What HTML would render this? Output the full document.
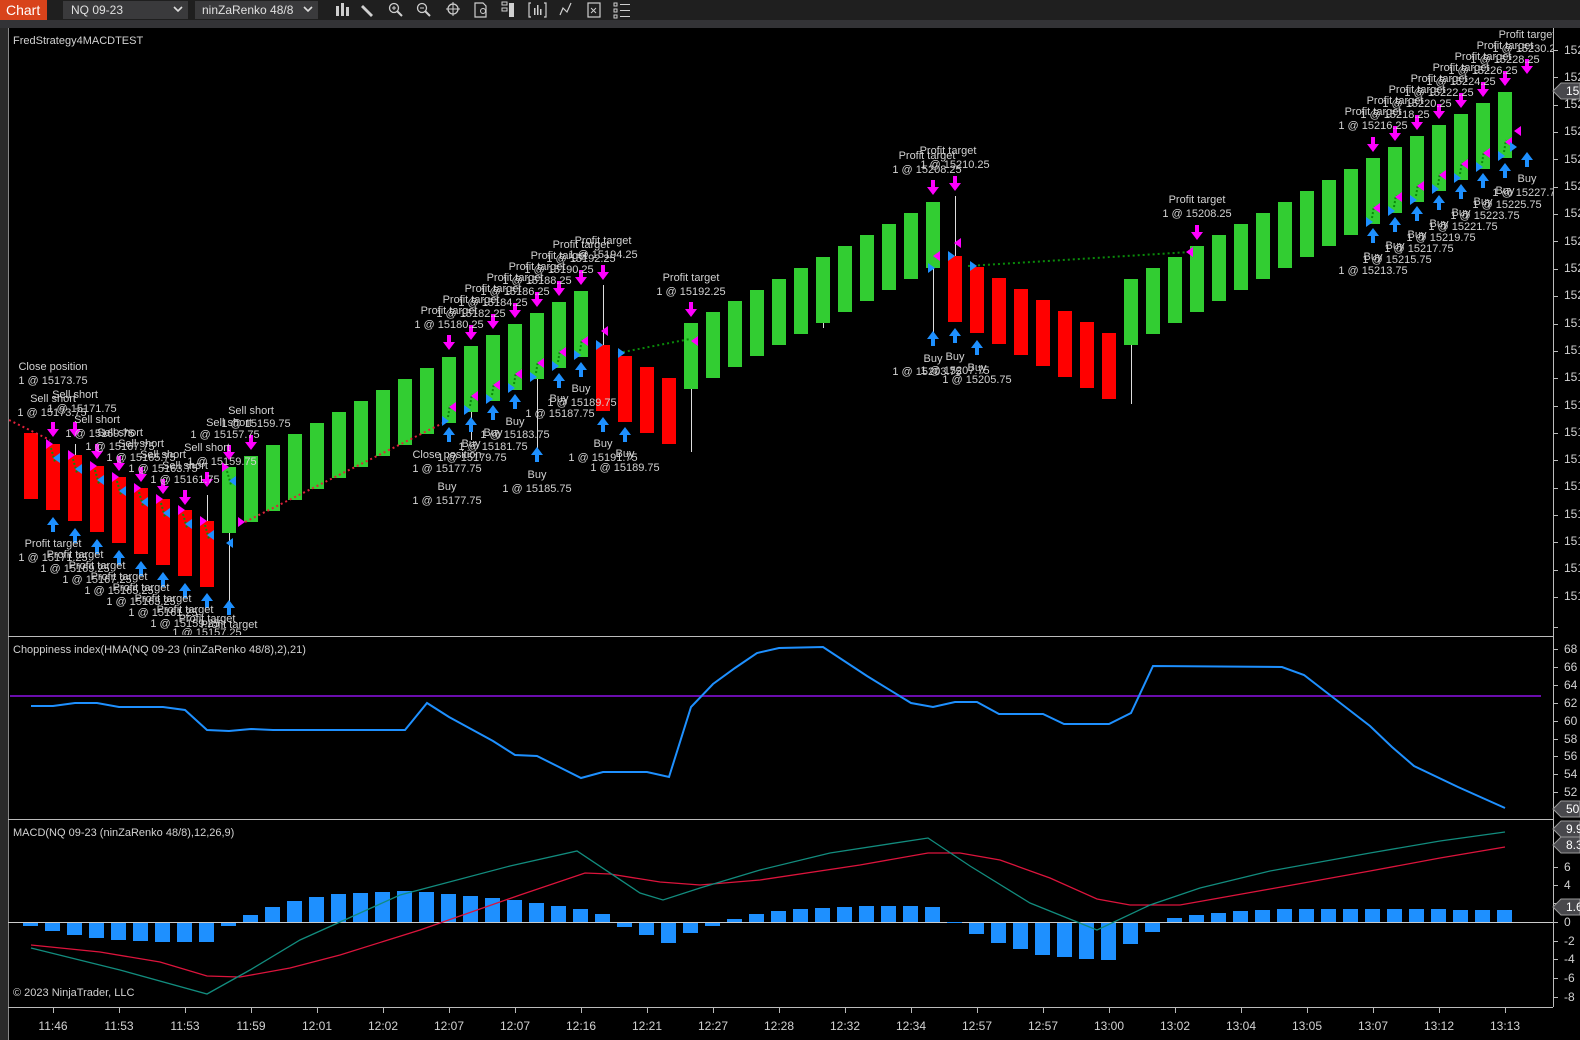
<!DOCTYPE html>
<html><head><meta charset="utf-8">
<style>
html,body{margin:0;padding:0;background:#1f1f1f;width:1580px;height:1040px;overflow:hidden}
svg{display:block}
text{font-family:"Liberation Sans",sans-serif}
</style></head>
<body>
<svg id="s" width="1580" height="1040" viewBox="0 0 1580 1040" xmlns="http://www.w3.org/2000/svg">
<defs>
<clipPath id="cm"><rect x="9" y="28" width="1544" height="607"/></clipPath>
<clipPath id="cw"><rect x="0" y="0" width="1580" height="1040"/></clipPath>
</defs>
<!-- toolbar -->
<rect x="0" y="0" width="1580" height="20" fill="#1f1f1f"/>
<rect x="0" y="20" width="1580" height="8" fill="#333336"/>
<rect x="0" y="0" width="47" height="20" fill="#d8431b"/>
<text x="6" y="15" font-size="14" fill="#fff">Chart</text>
<rect x="63" y="1" width="125" height="18" fill="#3a3a3c"/>
<text x="71" y="14" font-size="12" fill="#e0e0e0">NQ 09-23</text>
<path d="M174 7 l4 4 l4 -4" stroke="#ddd" stroke-width="1.6" fill="none"/>
<rect x="195" y="1" width="123" height="18" fill="#3a3a3c"/>
<text x="202" y="14" font-size="12" fill="#e0e0e0">ninZaRenko 48/8</text>
<path d="M304 7 l4 4 l4 -4" stroke="#ddd" stroke-width="1.6" fill="none"/>
<g fill="#cfcfcf" stroke="#cfcfcf">
<rect x="336" y="6" width="3" height="10" stroke="none"/><rect x="341" y="3" width="3" height="13" stroke="none"/><rect x="346" y="7" width="3" height="9" stroke="none"/>
<path d="M363 5 l10 10 l-2 2 l-10 -10 z" stroke="none"/>
<circle cx="394" cy="8" r="4.5" fill="none" stroke-width="1.3"/><path d="M397 11 l5 5" stroke-width="2"/><path d="M392 8 h4 M394 6 v4" stroke-width="1"/>
<circle cx="422" cy="8" r="4.5" fill="none" stroke-width="1.3"/><path d="M425 11 l5 5" stroke-width="2"/><path d="M420 8 h4" stroke-width="1"/>
<circle cx="453" cy="9" r="5" fill="none" stroke-width="1.3"/><path d="M453 2 v14 M446 9 h14" stroke-width="1"/>
<path d="M475 3 h8 l3 3 v11 h-11 z" fill="none" stroke-width="1.2"/><circle cx="483" cy="11" r="2.5" fill="none"/>
<rect x="502" y="2" width="5" height="3" fill="none"/><rect x="502" y="8" width="5" height="3" fill="none"/><rect x="509" y="3" width="5" height="14" stroke="none"/>
<path d="M531 3 h-2 v14 h2 M544 3 h2 v14 h-2" fill="none" stroke-width="1.2"/><rect x="534" y="8" width="1.5" height="7" stroke="none"/><rect x="537" y="5" width="1.5" height="10" stroke="none"/><rect x="540" y="9" width="1.5" height="6" stroke="none"/>
<path d="M560 15 l3 -7 l4 4 l4 -9" fill="none" stroke-width="1.2"/>
<rect x="588" y="3" width="12" height="14" fill="none" stroke-width="1.2"/><path d="M591 8 l5 5 M596 8 l-5 5" stroke-width="1"/>
<rect x="614" y="3" width="3" height="3" fill="none"/><rect x="614" y="9" width="3" height="3" fill="none"/><rect x="614" y="15" width="3" height="3" fill="none"/><path d="M620 4.5 h10 M620 10.5 h10 M620 16.5 h10" stroke-width="1"/>
</g>
<!-- chart area -->
<rect x="8" y="28" width="1572" height="1012" fill="#000"/>
<rect x="0" y="28" width="8" height="1012" fill="#2a2a2a"/>
<line x1="8.5" y1="28" x2="8.5" y2="1040" stroke="#888"/>
<line x1="1553.5" y1="28" x2="1553.5" y2="1007" stroke="#bbb"/>
<line x1="8" y1="636.5" x2="1553" y2="636.5" stroke="#bbb"/>
<line x1="8" y1="819.5" x2="1553" y2="819.5" stroke="#bbb"/>
<line x1="8" y1="1007.5" x2="1553" y2="1007.5" stroke="#bbb"/>
<line x1="8" y1="922.5" x2="1553" y2="922.5" stroke="#ccc"/>
<line x1="10" y1="696" x2="1541" y2="696" stroke="#6a0dad" stroke-width="2"/>
<g id="dyn"></g>
<g clip-path="url(#cm)" fill="#d2d2d2" font-size="11" text-anchor="middle" id="labels">
<text x="53" y="370">Close position</text><text x="53" y="384">1 @ 15173.75</text>
<text x="53" y="402">Sell short</text><text x="52" y="416">1 @ 15173.75</text>
<text x="75" y="398">Sell short</text><text x="82" y="412">1 @ 15171.75</text>
<text x="97" y="423">Sell short</text><text x="100" y="437">1 @ 15169.75</text>
<text x="120" y="436">Sell short</text><text x="120" y="450">1 @ 15167.75</text>
<text x="141" y="447">Sell short</text><text x="141" y="461">1 @ 15165.75</text>
<text x="163" y="458">Sell short</text><text x="163" y="472">1 @ 15163.75</text>
<text x="185" y="469">Sell short</text><text x="185" y="483">1 @ 15161.75</text>
<text x="207" y="451">Sell short</text><text x="222" y="465">1 @ 15159.75</text>
<text x="229" y="426">Sell short</text><text x="225" y="438">1 @ 15157.75</text>
<text x="251" y="414">Sell short</text><text x="256" y="427">1 @ 15159.75</text>
<text x="53" y="547">Profit target</text><text x="53" y="561">1 @ 15171.25</text>
<text x="75" y="558">Profit target</text><text x="75" y="572">1 @ 15169.25</text>
<text x="97" y="569">Profit target</text><text x="97" y="583">1 @ 15167.25</text>
<text x="119" y="580">Profit target</text><text x="119" y="594">1 @ 15165.25</text>
<text x="141" y="591">Profit target</text><text x="141" y="605">1 @ 15163.25</text>
<text x="163" y="602">Profit target</text><text x="163" y="616">1 @ 15161.25</text>
<text x="185" y="613">Profit target</text><text x="185" y="627">1 @ 15159.25</text>
<text x="207" y="622">Profit target</text><text x="207" y="636">1 @ 15157.25</text>
<text x="229" y="628">Profit target</text>
<text x="449" y="314">Profit target</text><text x="449" y="328">1 @ 15180.25</text>
<text x="471" y="303">Profit target</text><text x="471" y="317">1 @ 15182.25</text>
<text x="493" y="292">Profit target</text><text x="493" y="306">1 @ 15184.25</text>
<text x="515" y="281">Profit target</text><text x="515" y="295">1 @ 15186.25</text>
<text x="537" y="270">Profit target</text><text x="537" y="284">1 @ 15188.25</text>
<text x="559" y="259">Profit target</text><text x="559" y="273">1 @ 15190.25</text>
<text x="581" y="248">Profit target</text><text x="581" y="262">1 @ 15192.25</text>
<text x="603" y="244">Profit target</text><text x="603" y="258">1 @ 15194.25</text>
<text x="447" y="458">Close position</text><text x="447" y="472">1 @ 15177.75</text>
<text x="447" y="490">Buy</text><text x="447" y="504">1 @ 15177.75</text>
<text x="471" y="447">Buy</text><text x="472" y="461">1 @ 15179.75</text>
<text x="493" y="436">Buy</text><text x="493" y="450">1 @ 15181.75</text>
<text x="515" y="425">Buy</text><text x="515" y="438">1 @ 15183.75</text>
<text x="537" y="478">Buy</text><text x="537" y="492">1 @ 15185.75</text>
<text x="559" y="402">Buy</text><text x="560" y="417">1 @ 15187.75</text>
<text x="581" y="392">Buy</text><text x="582" y="406">1 @ 15189.75</text>
<text x="603" y="447">Buy</text><text x="603" y="461">1 @ 15191.75</text>
<text x="625" y="457">Buy</text><text x="625" y="471">1 @ 15189.75</text>
<text x="691" y="281">Profit target</text><text x="691" y="295">1 @ 15192.25</text>
<text x="927" y="159">Profit target</text><text x="927" y="173">1 @ 15208.25</text>
<text x="948" y="154">Profit target</text><text x="955" y="168">1 @ 15210.25</text>
<text x="933" y="362">Buy</text><text x="927" y="375">1 @ 15203.75</text>
<text x="955" y="360">Buy</text><text x="955" y="374">1 @ 15207.75</text>
<text x="977" y="371">Buy</text><text x="977" y="383">1 @ 15205.75</text>
<text x="1197" y="203">Profit target</text><text x="1197" y="217">1 @ 15208.25</text>
<text x="1373" y="115">Profit target</text><text x="1373" y="129">1 @ 15216.25</text>
<text x="1395" y="104">Profit target</text><text x="1395" y="118">1 @ 15218.25</text>
<text x="1417" y="93">Profit target</text><text x="1417" y="107">1 @ 15220.25</text>
<text x="1439" y="82">Profit target</text><text x="1439" y="96">1 @ 15222.25</text>
<text x="1461" y="71">Profit target</text><text x="1461" y="85">1 @ 15224.25</text>
<text x="1483" y="60">Profit target</text><text x="1483" y="74">1 @ 15226.25</text>
<text x="1505" y="49">Profit target</text><text x="1505" y="63">1 @ 15228.25</text>
<text x="1527" y="38">Profit target</text><text x="1527" y="52">1 @ 15230.25</text>
<text x="1373" y="260">Buy</text><text x="1373" y="274">1 @ 15213.75</text>
<text x="1395" y="249">Buy</text><text x="1397" y="263">1 @ 15215.75</text>
<text x="1417" y="238">Buy</text><text x="1419" y="252">1 @ 15217.75</text>
<text x="1439" y="227">Buy</text><text x="1441" y="241">1 @ 15219.75</text>
<text x="1461" y="216">Buy</text><text x="1463" y="230">1 @ 15221.75</text>
<text x="1483" y="205">Buy</text><text x="1485" y="219">1 @ 15223.75</text>
<text x="1505" y="194">Buy</text><text x="1507" y="208">1 @ 15225.75</text>
<text x="1527" y="182">Buy</text><text x="1527" y="196">1 @ 15227.75</text>
</g>
<g fill="#d2d2d2" font-size="11">
<text x="13" y="44">FredStrategy4MACDTEST</text>
<text x="13" y="653">Choppiness index(HMA(NQ 09-23 (ninZaRenko 48/8),2),21)</text>
<text x="13" y="836">MACD(NQ 09-23 (ninZaRenko 48/8),12,26,9)</text>
<text x="13" y="996">© 2023 NinjaTrader, LLC</text>
</g>
<g fill="#d2d2d2" font-size="12" id="axis">
<text x="1564" y="54">152</text><text x="1564" y="81">152</text><text x="1564" y="108">152</text><text x="1564" y="135">152</text><text x="1564" y="163">152</text><text x="1564" y="190">152</text><text x="1564" y="217">152</text><text x="1564" y="245">152</text><text x="1564" y="272">152</text><text x="1564" y="299">152</text>
<text x="1564" y="327">151</text><text x="1564" y="354">151</text><text x="1564" y="381">151</text><text x="1564" y="409">151</text><text x="1564" y="436">151</text><text x="1564" y="463">151</text><text x="1564" y="490">151</text><text x="1564" y="518">151</text><text x="1564" y="545">151</text><text x="1564" y="572">151</text><text x="1564" y="600">151</text>
<text x="1564" y="653">68</text><text x="1564" y="671">66</text><text x="1564" y="689">64</text><text x="1564" y="707">62</text><text x="1564" y="725">60</text><text x="1564" y="743">58</text><text x="1564" y="760">56</text><text x="1564" y="778">54</text><text x="1564" y="796">52</text>
<text x="1564" y="871">6</text><text x="1564" y="889">4</text><text x="1564" y="926">0</text><text x="1564" y="945">-2</text><text x="1564" y="963">-4</text><text x="1564" y="982">-6</text><text x="1564" y="1001">-8</text>
</g>
<g id="markers" font-size="12" fill="#fff"></g>
<g fill="#d2d2d2" font-size="12" text-anchor="middle">
<text x="53" y="1030">11:46</text><text x="119" y="1030">11:53</text><text x="185" y="1030">11:53</text><text x="251" y="1030">11:59</text><text x="317" y="1030">12:01</text><text x="383" y="1030">12:02</text><text x="449" y="1030">12:07</text><text x="515" y="1030">12:07</text><text x="581" y="1030">12:16</text><text x="647" y="1030">12:21</text><text x="713" y="1030">12:27</text><text x="779" y="1030">12:28</text><text x="845" y="1030">12:32</text><text x="911" y="1030">12:34</text><text x="977" y="1030">12:57</text><text x="1043" y="1030">12:57</text><text x="1109" y="1030">13:00</text><text x="1175" y="1030">13:02</text><text x="1241" y="1030">13:04</text><text x="1307" y="1030">13:05</text><text x="1373" y="1030">13:07</text><text x="1439" y="1030">13:12</text><text x="1505" y="1030">13:13</text>
</g>
</svg>
<script>
(function(){
var o=[];
function top(k){
 if(k<=8) return 433+11*k;
 if(k<=25) return 467-11*(k-9);
 if(k<=29) return 345+11*(k-26);
 if(k<=41) return 323-11*(k-30);
 if(k<=49) return 256+11*(k-42);
 return 279-11*(k-50);
}
function col(k){return (k<=8||(k>=26&&k<=29)||(k>=42&&k<=49))?'#ff0000':'#32cd32';}
var m=['<g clip-path="url(#cm)">'];
// wicks
var wk=[[207,495,521],[75,444,456],[229,533,615],[603,285,345],[691,389,452],[933,268,346],[955,196,256],[1131,345,404],[537,379,456],[823,320,328],[471,412,440]];
wk.forEach(function(w){m.push('<line x1="'+w[0]+'.5" y1="'+w[1]+'" x2="'+w[0]+'.5" y2="'+w[2]+'" stroke="#ddd"/>');});
for(var k=0;k<68;k++){var t=top(k);m.push('<rect x="'+(24+22*k)+'" y="'+t+'" width="14" height="66" fill="'+col(k)+'"/>');}
// dotted lines
m.push('<path d="M9 420 L50 440" stroke="#e0203a" stroke-width="2" stroke-dasharray="2 3"/>');
m.push('<path d="M245 522 L445 422" stroke="#e0203a" stroke-width="2" stroke-dasharray="2 3"/>');
m.push('<path d="M618 353 L690 339" stroke="#0a8a0a" stroke-width="2" stroke-dasharray="2 3"/>');
m.push('<path d="M968 266 L1190 252" stroke="#0a8a0a" stroke-width="2" stroke-dasharray="2 3"/>');
function dn(x,ty){return '<path d="M'+(x-2)+' '+(ty-15)+' h4 v7 h4 l-6 8 l-6 -8 h4 z" fill="#ff00ff"/>';}
function up(x,ty){return '<path d="M'+(x-2)+' '+(ty+15)+' h4 v-7 h4 l-6 -8 l-6 8 h4 z" fill="#1e90ff"/>';}
function tr(x,y,c){return '<path d="M'+x+' '+(y-5)+' l7 5 l-7 5 z" fill="'+c+'"/>';}
function tl(x,y,c){return '<path d="M'+x+' '+(y-5)+' l-7 5 l7 5 z" fill="'+c+'"/>';}
var D=[[53,437],[75,437],[97,459],[119,471],[141,482],[163,494],[185,505],[207,487],[229,460],[251,450],
[449,350],[471,340],[493,329],[515,318],[537,307],[559,296],[581,285],[603,280],[691,317],[933,195],[955,191],[1197,240],
[1373,152],[1395,141],[1417,130],[1439,119],[1461,108],[1483,97],[1505,86],[1527,74]];
D.forEach(function(a){m.push(dn(a[0],a[1]));});
var U=[[53,517],[75,528],[97,539],[119,550],[141,561],[163,572],[185,583],[207,593],[229,600],
[449,427],[471,417],[493,405],[515,394],[537,447],[559,373],[581,362],[603,417],[625,427],[933,331],[955,328],[977,340],
[1373,228],[1395,217],[1417,206],[1439,195],[1461,184],[1483,173],[1505,163],[1527,152]];
U.forEach(function(a){m.push(up(a[0],a[1]));});
// short trades triangles
for(var k=1;k<=9;k++){var c=31+22*k,t=top(k);
 m.push(tr(c-7,t,'#ff00ff'));m.push('<path d="M'+(c-2)+' '+(t+4)+' L'+(c+2)+' '+(t+18)+'" stroke="#0a8a0a" stroke-width="2" stroke-dasharray="2 2"/>');m.push(tl(c+7,t+14,'#1e90ff'));}
m.push(tr(238,522,'#ff00ff'));m.push(tl(233,543,'#1e90ff'));
// long trades
var L=[19,20,21,22,23,24,25,61,62,63,64,65,66,67];
L.forEach(function(k){var c=31+22*k,b=top(k)+66;
 m.push(tr(c-7,b-2,'#1e90ff'));m.push('<path d="M'+(c-1)+' '+(b-6)+' L'+(c+1)+' '+(b-18)+'" stroke="#0a8a0a" stroke-width="2" stroke-dasharray="2 2"/>');m.push(tl(c+7,b-16,'#ff00ff'));});
m.push(tr(596,345,'#1e90ff'));m.push(tl(608,331,'#ff00ff'));
m.push(tr(618,353,'#1e90ff'));m.push(tl(698,341,'#ff00ff'));
m.push(tr(928,268,'#1e90ff'));m.push(tl(940,256,'#ff00ff'));
m.push(tr(948,256,'#1e90ff'));m.push(tl(961,243,'#ff00ff'));
m.push(tr(970,266,'#1e90ff'));m.push(tl(1193,252,'#ff00ff'));
m.push(tr(1510,147,'#1e90ff'));m.push(tl(1521,131,'#ff00ff'));
m.push('</g>');
// choppiness
var ch="31,706 53,706 75,703 97,703 119,707 163,707 185,710 207,730 229,731 251,729 273,730 405,730 427,703 449,717 471,729 493,741 515,755 537,756 559,767 581,778 603,772 647,772 669,777 691,707 713,684 735,668 757,653 779,648 823,647 867,676 911,703 933,707 955,702 977,702 999,714 1043,714 1064,724 1109,724 1131,713 1153,666 1282,667 1304,675 1326,692 1348,709 1370,726 1392,747 1414,766 1458,787 1505,808";
m.push('<polyline points="'+ch+'" fill="none" stroke="#1e90ff" stroke-width="2"/>');
// MACD histogram
var H=[-3,-8,-12,-15,-17,-18,-19,-19,-19,-3,7,15,21,25,28,29,30,31,30,28,26,24,22,19,16,13,8,-4,-12,-20,-10,-3,3,8,11,13,14,15,16,16,16,15,0,-11,-20,-26,-32,-34,-36,-37,-21,-9,4,7,9,11,12,13,13,13,13,13,13,13,13,12,12,12];
for(var k=0;k<68;k++){var h=H[k],x=23+22*k;
 if(h>=0)m.push('<rect x="'+x+'" y="'+(922-h)+'" width="15" height="'+Math.max(h,1)+'" fill="#1e90ff"/>');
 else m.push('<rect x="'+x+'" y="923" width="15" height="'+(-h)+'" fill="#1e90ff"/>');}
var te="31,948 120,970 207,994 250,970 300,940 400,895 510,866 577,851 640,893 663,900 700,888 760,870 830,853 928,838 970,866 1030,903 1097,930 1150,905 1200,888 1270,871 1370,853 1440,841 1505,832";
var rd="31,945 100,952 160,962 207,976 240,977 290,968 340,955 420,930 520,895 585,873 610,874 660,882 700,885 760,880 860,865 928,853 960,853 1000,860 1050,878 1097,899 1130,905 1180,905 1270,889 1370,871 1440,858 1505,847";
m.push('<polyline points="'+rd+'" fill="none" stroke="#dc143c" stroke-width="1.3"/>');
m.push('<polyline points="'+te+'" fill="none" stroke="#128c7e" stroke-width="1.3"/>');
// axis ticks
var tk=[];
for(var i=0;i<21;i++){var y=Math.round(50+27.35*i);tk.push('M1553 '+y+'.5 h5');}
tk.push('M1553 627.5 h5');
[649,667,685,703,721,739,756,774,792,867,885,903,922,941,959,978,997].forEach(function(y){tk.push('M1553 '+y+'.5 h5');});
for(var i=0;i<23;i++){var x=53+66*i;tk.push('M'+x+'.5 1007 v6');}
m.push('<path d="'+tk.join(' ')+'" stroke="#bbb"/>');
document.getElementById('dyn').innerHTML=m.join('');
var mk=[[91,'152'],[809,'50.1'],[829,'9.95'],[845,'8.34'],[907,'1.61']];
var s='';
mk.forEach(function(a){var y=a[0];s+='<path d="M1553 '+y+' L1561 '+(y-8)+' H1580 V'+(y+8)+' H1561 Z" fill="#48484c" stroke="#999"/><text x="1566" y="'+(y+4)+'">'+a[1]+'</text>';});
document.getElementById('markers').innerHTML=s;
})();
</script>
</body></html>
